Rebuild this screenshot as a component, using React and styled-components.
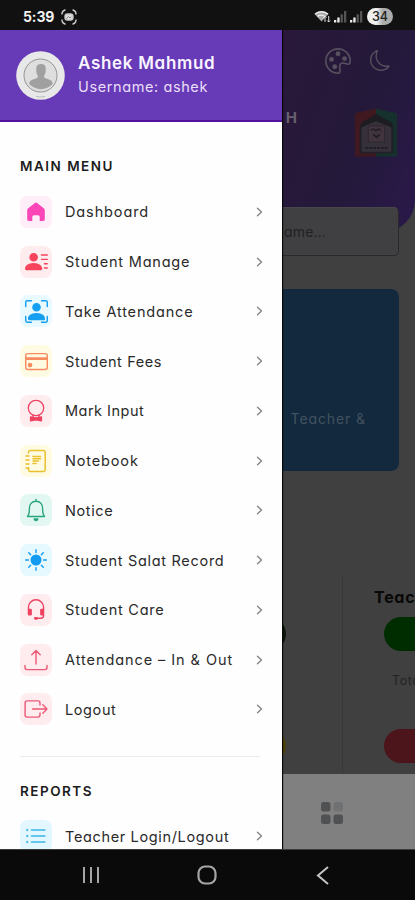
import React from "react";
import styled, { createGlobalStyle } from "styled-components";
import { BsPersonLinesFill, BsPersonBoundingBox, BsCreditCard, BsSunFill, BsHeadset, BsPalette, BsMoon } from "react-icons/bs";

const GlobalStyle = createGlobalStyle`
  *, *::before, *::after { box-sizing: border-box; }
  body { margin: 0; background: #000; font-family: Inter, "Open Sans", sans-serif; font-feature-settings: "cv11"; }
`;

const Screen = styled.div`
  display: flex;
  flex-direction: column;
  width: 415px;
  height: 900px;
  overflow: hidden;
`;

const StatusBar = styled.header`
  display: flex;
  align-items: center;
  flex: 0 0 30px;
  padding: 3px 22px 0 23px;
  background: #111;
  color: #f2f2f2;
`;
const Clock = styled.span`
  width: 33px;
  font-size: 14px;
  font-weight: 700;
  letter-spacing: -0.1px;
  margin-right: 5px;
`;
const StatusIcons = styled.div`
  display: flex;
  align-items: center;
  gap: 3px;
  margin-left: auto;
`;
const Battery = styled.span`
  width: 26px;
  height: 17px;
  border-radius: 9px;
  margin-left: 1px;
  background: linear-gradient(90deg, #f0f0f0 36%, #ababab 60%);
  color: #222;
  font-size: 12.5px;
  font-weight: 500;
  line-height: 17px;
  text-align: center;
`;

const Stage = styled.main`
  position: relative;
  flex: 1;
  overflow: hidden;
  background: #404040;
`;
const Page = styled.div`
  display: flex;
  flex-direction: column;
  height: 100%;
`;
const Hero = styled.section`
  flex: 0 0 202px;
  padding: 17px 15px 0 0;
  background: linear-gradient(110deg, #29183a 60%, #24193a 82%, #2a194b);
  border-radius: 0 0 32px 32px;
`;
const HeroTools = styled.div`
  display: flex;
  justify-content: flex-end;
  align-items: center;
  gap: 19px;
  height: 27px;
  padding-right: 9px;
  color: #57505f;
`;
const Brand = styled.div`
  display: flex;
  justify-content: flex-end;
  align-items: flex-start;
  gap: 56px;
  margin-top: 34px;
  padding-right: 1px;
`;
const BrandName = styled.span`
  color: #66606e;
  font-size: 15px;
  font-weight: 700;
`;
const SearchBox = styled.div`
  flex: 0 0 49px;
  margin: -25px 16px 0;
  padding-left: 267px;
  border: 1px solid #29292c;
  border-top-color: #48484a;
  border-radius: 5px;
  background: #404042;
  color: #202022;
  font-size: 14px;
  letter-spacing: 0.15px;
  line-height: 47px;
`;
const Banner = styled.section`
  display: flex;
  justify-content: flex-end;
  align-items: flex-end;
  flex: 0 0 182px;
  margin: 33px 16px 0;
  padding: 0 33px 44px;
  border-radius: 8px;
  background: #13293d;
  color: #425261;
  font-size: 14px;
  letter-spacing: 0.9px;
`;
const Stats = styled.section`
  display: grid;
  grid-template-columns: 343px 1fr;
  flex: 1;
  margin-top: 104px;
  overflow: hidden;
`;
const StatColumn = styled.div`
  display: flex;
  flex-direction: column;
  align-items: ${(p) => (p.$end ? "flex-end" : "flex-start")};
  padding: ${(p) => (p.$end ? "42px 56px 0 0" : "13px 0 0 31px")};
  border-right: ${(p) => (p.$end ? "1px solid #393939" : "0")};
`;
const StatTitle = styled.strong`
  height: 29px;
  color: #080808;
  font-size: 16px;
  letter-spacing: 0.7px;
  line-height: 18px;
  white-space: nowrap;
`;
const Pill = styled.div`
  flex: 0 0 34px;
  width: 120px;
  margin-left: 10px;
  margin-bottom: ${(p) => p.$gap || 0}px;
  border-radius: 17px;
  background: ${(p) => p.$color};
`;
const StatLabel = styled.span`
  height: 56px;
  margin: 0 0 0 18px;
  color: #242424;
  font-size: 12.5px;
  letter-spacing: 0.6px;
  line-height: 15px;
  white-space: nowrap;
`;
const TabBar = styled.nav`
  display: flex;
  align-items: center;
  flex: 0 0 75px;
  padding-left: 320px;
  padding-top: 2px;
  background: #808080;
`;

const Drawer = styled.aside`
  position: absolute;
  inset: 0 auto 0 0;
  width: 282px;
  overflow: hidden;
  background: #fefefe;
  box-shadow: 1px 0 1px #080808;
`;
const Profile = styled.div`
  display: flex;
  align-items: center;
  gap: 13px;
  height: 92px;
  padding-left: 16px;
  border-bottom: 2px solid #50119c;
  background: #673ab7;
`;
const ProfileText = styled.div`
  display: flex;
  flex-direction: column;
  color: #f9f5ff;
  white-space: nowrap;
`;
const Name = styled.strong`
  font-size: 17px;
  font-weight: 600;
  letter-spacing: 0.7px;
  line-height: 23px;
`;
const Username = styled.span`
  font-size: 14.5px;
  letter-spacing: 0.6px;
  line-height: 23px;
  color: #eadff8;
`;
const SectionTitle = styled.h2`
  margin: ${(p) => p.$top}px 0 0 20px;
  color: #1c1c1c;
  font-size: 13.5px;
  font-weight: 600;
  letter-spacing: 1.5px;
  line-height: 20px;
`;
const Menu = styled.ul`
  display: flex;
  flex-direction: column;
  margin: 0;
  padding: ${(p) => p.$top}px 19px 0 20px;
  list-style: none;
`;
const MenuRow = styled.li`
  display: flex;
  align-items: center;
  height: 49.75px;
  color: #2a2a2a;
`;
const Tile = styled.span`
  display: grid;
  place-items: center;
  width: 32px;
  height: 32px;
  margin-right: 13px;
  border-radius: 8px;
  background: ${(p) => p.$bg};
  color: ${(p) => p.$fg};
`;
const Label = styled.span`
  flex: 1;
  font-size: 14.5px;
  font-weight: 400;
  letter-spacing: ${(p) => p.$track}px;
  white-space: nowrap;
`;
const Divider = styled.hr`
  height: 1px;
  margin: 22px 22px 0 20px;
  border: 0;
  background: #ededed;
`;

const SystemNav = styled.footer`
  display: grid;
  grid-template-columns: 182px 49px 184px;
  align-items: center;
  justify-items: center;
  flex: 0 0 51px;
  border-top: 1px solid #3a3a3a;
  background: #0a0a0a;
  color: #a5a5a5;
`;

const Line = ({ size = 24, width = 1.6, children }) => (
  <svg width={size} height={size} viewBox="0 0 24 24" fill="none" stroke="currentColor" strokeWidth={width} strokeLinecap="round" strokeLinejoin="round">
    {children}
  </svg>
);
const HomeIcon = () => (
  <svg width="24" height="24" viewBox="0 0 24 24" fill="currentColor">
    <path d="M10.9 2.9a1.8 1.8 0 0 1 2.2 0l6.6 5.3c.8.7 1.1 1.4 1.1 2.4v8.7c0 1-.7 1.7-1.7 1.7h-3.4v-4c0-1-.7-1.7-1.7-1.7h-4c-1 0-1.7.7-1.7 1.7v4H4.9c-1 0-1.7-.7-1.7-1.7v-8.7c0-1 .3-1.7 1.1-2.4z" />
  </svg>
);
const RibbonIcon = () => (
  <Line width={1.3}>
    <circle cx="12" cy="9" r="7.7" />
    <path d="M9 16v2M15 16v2" />
    <path d="M6.500 17.800l5.500 1 5.500-1v4l-5.500-1-5.500 1z" fill="currentColor" />
  </Line>
);
const NotebookIcon = () => (
  <Line width={1.5}>
    <path d="M4.500 4V3.200c0-1 .7-1.700 1.700-1.700h13.300c1 0 1.700.7 1.700 1.700v17.600c0 1-.7 1.700-1.700 1.700H6.200c-1 0-1.700-.7-1.700-1.700V20M2 7h3M2 11h3M2 15h3M2 19h3" />
    <path d="M9 7.500h7.500M9 9.800h7.500M9 12.100h5.500M9 14.400h3" />
  </Line>
);
const BellIcon = () => (
  <Line width={1.4}>
    <path d="M12 1.500v1.700M3.500 18.500h17c-1.500-1.700-1.900-3-1.900-8 0-4.200-2.500-7.200-6.600-7.200s-6.600 3-6.600 7.200c0 5-.4 6.300-1.900 8z" />
    <path d="M10.200 21h3.600c-.3 1-.9 1.600-1.800 1.600s-1.500-.6-1.800-1.600z" fill="currentColor" />
  </Line>
);
const UploadIcon = () => (
  <Line width={1.4}>
    <path d="M12 16V2.500M7.800 6.700 12 2.500l4.200 4.200M1 17.500v2c0 1.300.8 2.100 2.100 2.100h17.800c1.300 0 2.100-.8 2.100-2.100v-2" />
  </Line>
);
const LogoutIcon = () => (
  <Line width={1.4}>
    <path d="M16 8V6c0-1.300-.8-2.100-2.100-2.100H3.200C1.900 3.900 1.100 4.700 1.100 6v12c0 1.300.8 2.100 2.100 2.100h10.700c1.300 0 2.100-.8 2.100-2.100v-2M8.500 12H23M18.800 7.800 23 12l-4.200 4.200" />
  </Line>
);
const ListIcon = () => (
  <Line width={1.4}>
    <path d="M7.500 6h13.500M7.500 12h13.500M7.500 18h13.500" />
    <path d="M3.200 5.500v1M3.200 11.500v1M3.200 17.500v1M2.800 6h1M2.800 12h1M2.800 18h1" />
  </Line>
);
const Chevron = () => (
  <svg width="7" height="10" viewBox="0 0 7 10" fill="none" stroke="#858585" strokeWidth="1.4" strokeLinecap="round" strokeLinejoin="round">
    <path d="M1.500 1.300l4 3.700-4 3.700" />
  </svg>
);
const Avatar = () => (
  <svg width="49" height="49" viewBox="0 0 49 49">
    <circle cx="24.500" cy="24.500" r="24.300" fill="#e8e8e8" />
    <circle cx="24.500" cy="24.500" r="16.500" fill="#dedede" stroke="#939393" />
    <path d="M20.300 17c0-2.800 1.700-4 4.700-4s4.700 1.200 4.700 4v3c0 2-1 3-1.500 4.500v2.300l6 2.300c2 .8 2.500 3 2.500 4-6.500 6.700-17 6.700-23.500 0 0-1 .5-3.200 2.500-4l6-2.300v-2.300c-.8-1.500-1.400-2.500-1.400-4.500z" fill="#a0a0a0" />
    <path d="M20 45.500q4.500 1 9 0" fill="none" stroke="#bbb" />
  </svg>
);
const CaptureIcon = () => (
  <svg width="16" height="16" viewBox="0 0 16 16" fill="none" stroke="#c8c8c8" strokeWidth="1.400" strokeLinecap="round">
    <path d="M1 5q0-3 3-4M12 1q3 1 3 4M15 11q0 3-3 4M4 15q-3-1-3-4" />
    <rect x="4" y="5" width="8" height="6" rx="2.500" fill="#ddd" />
    <path d="M5.500 9.500l2-2 1.500 1.500 1-1" stroke="#777" strokeWidth="0.8" />
  </svg>
);
const WifiIcon = () => (
  <svg width="17" height="13" viewBox="0 0 17 13">
    <path d="M.5 4Q7.500-1.500 14.500 4L7.500 11.500z" fill="#aaa" />
    <path d="M1 4Q7.500-.5 14 4M3.500 6.300q4-2.500 7.500.2" fill="none" stroke="#eee" strokeWidth="1.400" />
    <path d="M11 6v6M9.300 7.700 11 6l1.500 1.500M14.700 6v6M13.200 10.500l1.500 1.500 1.500-1.500" fill="none" stroke="#ddd" />
  </svg>
);
const SignalIcon = () => (
  <svg width="13" height="13" viewBox="0 0 13 13">
    <path d="M0 10h2.300v2.500H0zM3.300 7.500h2.300v5H3.300z" fill="#eee" />
    <path d="M6.600 4.300h2.300v8.200H6.600zM10 1h2.300v11.500H10z" fill="#555" />
  </svg>
);
const SchoolCrest = () => (
  <svg width="46" height="49" viewBox="0 0 48 50">
    <path d="M2 5 24 0v50H2z" fill="#401820" />
    <path d="M24 0l22 5v45H24z" fill="#15302d" />
    <path d="M8 19l16-9 17 9v27H8z" fill="#35303a" stroke="#222027" strokeWidth="2" />
    <path d="M8 15l16-9 17 9v5l-17-7-16 7z" fill="#1c1c21" />
    <path d="M16 18h17v17H16z" fill="#42343f" stroke="#2c2730" />
    <path d="M19 23q2-3 5 0 3-3 5 0M21 27l3.500 3 3.500-3" fill="none" stroke="#222026" strokeWidth="2" />
    <path d="M13 41h23" stroke="#1d1c22" strokeWidth="2" strokeDasharray="3 1" />
  </svg>
);
const GridIcon = () => (
  <svg width="24" height="24" viewBox="0 0 24 24" fill="#505153">
    <rect x="1" y="1" width="9.500" height="9.500" rx="2.500" />
    <rect x="13.500" y="1" width="9.500" height="9.500" rx="2.500" fill="#707172" />
    <rect x="1" y="13.500" width="9.500" height="9.500" rx="2.500" />
    <rect x="13.500" y="13.500" width="9.500" height="9.500" rx="2.500" />
  </svg>
);

const mainItems = [
  { label: "Dashboard", icon: <HomeIcon />, fg: "#fc46b8", bg: "#ffedf8", track: 0.88 },
  { label: "Student Manage", icon: <BsPersonLinesFill size={23} />, fg: "#f7435b", bg: "#ffecee", track: 0.8 },
  { label: "Take Attendance", icon: <BsPersonBoundingBox size={23} />, fg: "#159ff0", bg: "#e8f9ff", track: 0.83 },
  { label: "Student Fees", icon: <BsCreditCard size={23} />, fg: "#f98b61", bg: "#fffbe3", track: 0.6 },
  { label: "Mark Input", icon: <RibbonIcon />, fg: "#ed4261", bg: "#ffecee", track: 0.48 },
  { label: "Notebook", icon: <NotebookIcon />, fg: "#e9c02d", bg: "#fffbe3", track: 0.85 },
  { label: "Notice", icon: <BellIcon />, fg: "#27a57c", bg: "#e2f7f1", track: 0.6 },
  { label: "Student Salat Record", icon: <BsSunFill size={22} />, fg: "#139bf1", bg: "#e6f9ff", track: 0.7 },
  { label: "Student Care", icon: <BsHeadset size={22} />, fg: "#ed4261", bg: "#ffecee", track: 0.75 },
  { label: "Attendance – In & Out", icon: <UploadIcon />, fg: "#ec5877", bg: "#ffecee", track: 0.93 },
  { label: "Logout", icon: <LogoutIcon />, fg: "#ec5877", bg: "#ffecee", track: 0.6 },
];
const reportItems = [
  { label: "Teacher Login/Logout", icon: <ListIcon />, fg: "#3cb5e7", bg: "#e2f7ff", track: 0.65 },
];

const MenuList = ({ items, top }) => (
  <Menu $top={top}>
    {items.map((item) => (
      <MenuRow key={item.label}>
        <Tile $bg={item.bg} $fg={item.fg}>{item.icon}</Tile>
        <Label $track={item.track}>{item.label}</Label>
        <Chevron />
      </MenuRow>
    ))}
  </Menu>
);

export default function App() {
  return (
    <Screen>
      <GlobalStyle />
      <StatusBar>
        <Clock>5:39</Clock>
        <CaptureIcon />
        <StatusIcons>
          <WifiIcon /><SignalIcon /><SignalIcon />
          <Battery>34</Battery>
        </StatusIcons>
      </StatusBar>
      <Stage>
        <Page>
          <Hero>
            <HeroTools><BsPalette size={26} /><BsMoon size={21} /></HeroTools>
            <Brand><BrandName>H</BrandName><SchoolCrest /></Brand>
          </Hero>
          <SearchBox>ame...</SearchBox>
          <Banner>Teacher &amp;</Banner>
          <Stats>
            <StatColumn $end>
              <Pill $color="#0b160b" $gap={78} />
              <Pill $color="#4b4108" />
            </StatColumn>
            <StatColumn>
              <StatTitle>Teacher</StatTitle>
              <Pill $color="#002d00" $gap={22} />
              <StatLabel>Total</StatLabel>
              <Pill $color="#4c141b" />
            </StatColumn>
          </Stats>
          <TabBar><GridIcon /></TabBar>
        </Page>
        <Drawer>
          <Profile>
            <Avatar />
            <ProfileText>
              <Name>Ashek Mahmud</Name>
              <Username>Username: ashek</Username>
            </ProfileText>
          </Profile>
          <SectionTitle $top={34}>MAIN MENU</SectionTitle>
          <MenuList items={mainItems} top={11} />
          <Divider />
          <SectionTitle $top={24}>REPORTS</SectionTitle>
          <MenuList items={reportItems} top={10} />
        </Drawer>
      </Stage>
      <SystemNav>
        <svg width="18" height="18" viewBox="0 0 18 18" stroke="currentColor" strokeWidth="2"><path d="M2 1v16M9 1v16M16 1v16" /></svg>
        <svg width="20" height="20" viewBox="0 0 20 20" fill="none" stroke="currentColor" strokeWidth="2.200"><rect x="1.500" y="1.500" width="17" height="17" rx="6.500" /></svg>
        <svg width="14" height="19" viewBox="0 0 14 19" fill="none" stroke="#c5c5c5" strokeWidth="2"><path d="M12 1 2 9.500 12 18" /></svg>
      </SystemNav>
    </Screen>
  );
}
